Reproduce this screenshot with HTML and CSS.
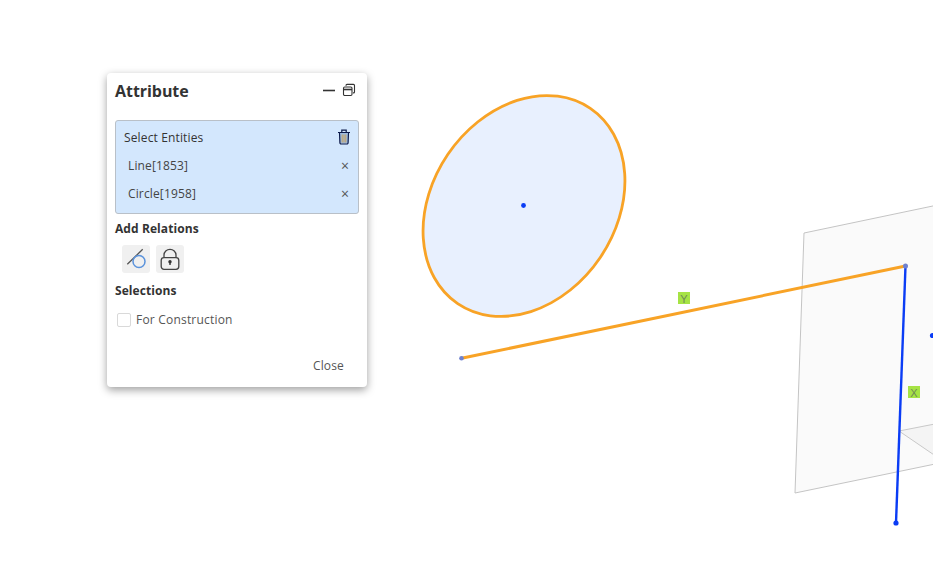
FILE: index.html
```html
<!DOCTYPE html>
<html lang="en">
<head>
<meta charset="utf-8">
<title>Attribute</title>
<link rel="stylesheet" href="styles.css">
</head>
<body>
<svg class="scene" width="933" height="582" viewBox="0 0 933 582">
  <polygon class="plane" points="804,233 940,204.5 940,463 795,493"/>
  <polygon class="plane-inner" points="899,431 940,423 940,459"/>
  <ellipse class="circle" cx="524" cy="206" rx="118" ry="92" transform="rotate(-55.8 524 206)"/>
  <circle class="pt" cx="523.5" cy="205.5" r="2.4"/>
  <line class="blue" x1="905.5" y1="266" x2="896" y2="523"/>
  <line class="orange" x1="461.5" y1="358.3" x2="905.5" y2="266"/>
  <circle class="pt" cx="932.5" cy="335.5" r="2.6"/>
  <circle class="pt" cx="896" cy="523" r="2.6"/>
  <circle class="end" cx="461.5" cy="358.3" r="2.3"/>
  <circle class="end" cx="905.5" cy="266" r="2.5"/>
  <rect class="tag" x="678" y="292" width="12" height="12"/>
  <text class="tag-text" x="684" y="302.5">Y</text>
  <rect class="tag" x="908" y="386" width="12" height="12"/>
  <text class="tag-text" x="914" y="396.5">X</text>
</svg>

<section class="panel">
  <header class="panel-head">
    <h1 class="panel-title">Attribute</h1>
    <div class="panel-tools">
      <svg class="ico" width="14" height="14" viewBox="0 0 14 14"><path d="M1 7.5h12" stroke="#333" stroke-width="1.6" fill="none"/></svg>
      <svg class="ico" width="14" height="14" viewBox="0 0 14 14" fill="none" stroke="#333" stroke-width="1.1"><rect x="1.5" y="4" width="8.5" height="8.5" rx="1.2"/><path d="M1.5 6.5h8.5" stroke-width="1.6"/><path d="M4 2.8V2.4a1 1 0 0 1 1-1h6.5a1 1 0 0 1 1 1v6.5a1 1 0 0 1-1 1H11"/></svg>
    </div>
  </header>

  <div class="select-box">
    <div class="select-head">
      <span>Select Entities</span>
      <svg class="trash" width="14" height="16" viewBox="0 0 14 16" fill="none"><rect x="3" y="4" width="8" height="10.5" rx="1" fill="#9dbbe0"/><path d="M5.2 5.5v8M7 5.5v8M8.8 5.5v8" stroke="#c9a25e" stroke-width="1"/><path d="M1 3.5h12M4.8 3.3V1.2h4.4v2.1M2.5 3.5l.4 10.3a1.2 1.2 0 0 0 1.2 1.2h5.8a1.2 1.2 0 0 0 1.2-1.2l.4-10.3" stroke="#0c1a4a" stroke-width="1.2"/></svg>
    </div>
    <div class="entity"><span>Line[1853]</span><span class="entity-x">×</span></div>
    <div class="entity"><span>Circle[1958]</span><span class="entity-x">×</span></div>
  </div>

  <h2 class="section-title">Add Relations</h2>
  <div class="relations">
    <button class="rel-btn" type="button">
      <svg width="24" height="24" viewBox="0 0 24 24" fill="none"><path d="M3.3 17.3 18.7 2.3" stroke="#555" stroke-width="1.3"/><circle cx="15" cy="14.5" r="6" stroke="#5b93dc" stroke-width="1.5"/></svg>
    </button>
    <button class="rel-btn" type="button">
      <svg width="24" height="24" viewBox="0 0 24 24" fill="none"><rect x="3.2" y="10.7" width="17.6" height="11.6" rx="2.8" stroke="#444" stroke-width="1.3"/><path d="M6 10.7V8a6 5.7 0 0 1 12 0v2.7" stroke="#444" stroke-width="1.3"/><circle cx="12" cy="14.7" r="1.7" fill="#333"/><path d="M12 15v3" stroke="#333" stroke-width="1.4"/></svg>
    </button>
  </div>

  <h2 class="section-title section-second">Selections</h2>
  <label class="check-row">
    <span class="check"></span>
    <span>For Construction</span>
  </label>

  <footer class="panel-foot">
    <button class="close" type="button">Close</button>
  </footer>
</section>
</body>
</html>
```

FILE: styles.css
```css
* { box-sizing: border-box; }

html, body {
  margin: 0;
  padding: 0;
  width: 933px;
  height: 582px;
  overflow: hidden;
  background: #fff;
  font-family: "Open Sans", "Noto Sans", sans-serif;
}

.scene {
  position: absolute;
  left: 0;
  top: 0;
}

.plane {
  fill: #fafafa;
  stroke: #c4c4c4;
  stroke-width: 1;
}

.plane-inner {
  fill: #f4f4f4;
  stroke: #c8c8c8;
  stroke-width: 1;
}

.circle {
  fill: #e8f0fe;
  stroke: #f8a326;
  stroke-width: 2.8;
}

.orange {
  stroke: #f8a326;
  stroke-width: 3;
}

.blue {
  stroke: #0a3cf5;
  stroke-width: 2.4;
}

.pt { fill: #0a3cf5; }

.end { fill: #6f82cf; }

.tag { fill: #a6e344; }

.tag-text {
  font-family: "Liberation Sans", sans-serif;
  font-size: 11px;
  fill: #6f8a58;
  text-anchor: middle;
}

.panel {
  position: absolute;
  left: 107px;
  top: 73px;
  width: 260px;
  height: 314px;
  padding: 0 8px;
  background: #fff;
  border-radius: 4px;
  box-shadow: 0 3px 9px rgba(0, 0, 0, .38);
  display: flex;
  flex-direction: column;
}

.panel-head {
  height: 47px;
  display: flex;
  align-items: flex-start;
  justify-content: space-between;
  padding-top: 7px;
}

.panel-title {
  margin: 0;
  font-size: 16px;
  line-height: 22px;
  font-weight: 700;
  color: #333;
  letter-spacing: -.05px;
}

.panel-tools {
  display: flex;
  gap: 6px;
  padding: 3px 3px 0 0;
}

.ico { display: block; }

.select-box {
  height: 94px;
  padding: 0 6px 0 8px;
  background: #d3e7fd;
  border: 1px solid #b9c0c8;
  border-radius: 3px;
  font-size: 12px;
  letter-spacing: .14px;
  color: #333;
}

.select-head {
  height: 32px;
  display: flex;
  align-items: center;
  justify-content: space-between;
}

.trash { margin-right: 1px; }

.entity {
  height: 28px;
  margin-top: -2px;
  margin-bottom: 2px;
  padding: 0 0 0 4px;
  display: flex;
  align-items: center;
  justify-content: space-between;
  color: #444;
}

.entity-x {
  width: 14px;
  text-align: center;
  font-size: 14px;
  color: #555;
}

.section-title {
  margin: 6px 0 0;
  font-size: 12px;
  line-height: 18px;
  font-weight: 700;
  letter-spacing: .08px;
  color: #333;
}

.section-second { margin-top: 9px; }

.relations {
  display: flex;
  gap: 6px;
  padding: 7px 0 0 7px;
}

.rel-btn {
  width: 28px;
  height: 28px;
  padding: 2px;
  border: 0;
  border-radius: 3px;
  background: #f0f0f0;
  display: flex;
  align-items: center;
  justify-content: center;
}

.check-row {
  margin-top: 11px;
  padding-left: 2px;
  display: flex;
  align-items: center;
  gap: 5px;
  font-size: 12px;
  line-height: 18px;
  letter-spacing: .2px;
  color: #555;
}

.check {
  width: 14px;
  height: 14px;
  border: 1px solid #d9d9d9;
  border-radius: 2px;
  background: #fff;
}

.panel-foot {
  margin-top: auto;
  height: 30px;
  display: flex;
  justify-content: flex-end;
  align-items: flex-start;
}

.close {
  padding: 0 15px 0 0;
  border: 0;
  background: none;
  font: inherit;
  font-size: 12px;
  line-height: 18px;
  letter-spacing: .15px;
  color: #555;
}
```
